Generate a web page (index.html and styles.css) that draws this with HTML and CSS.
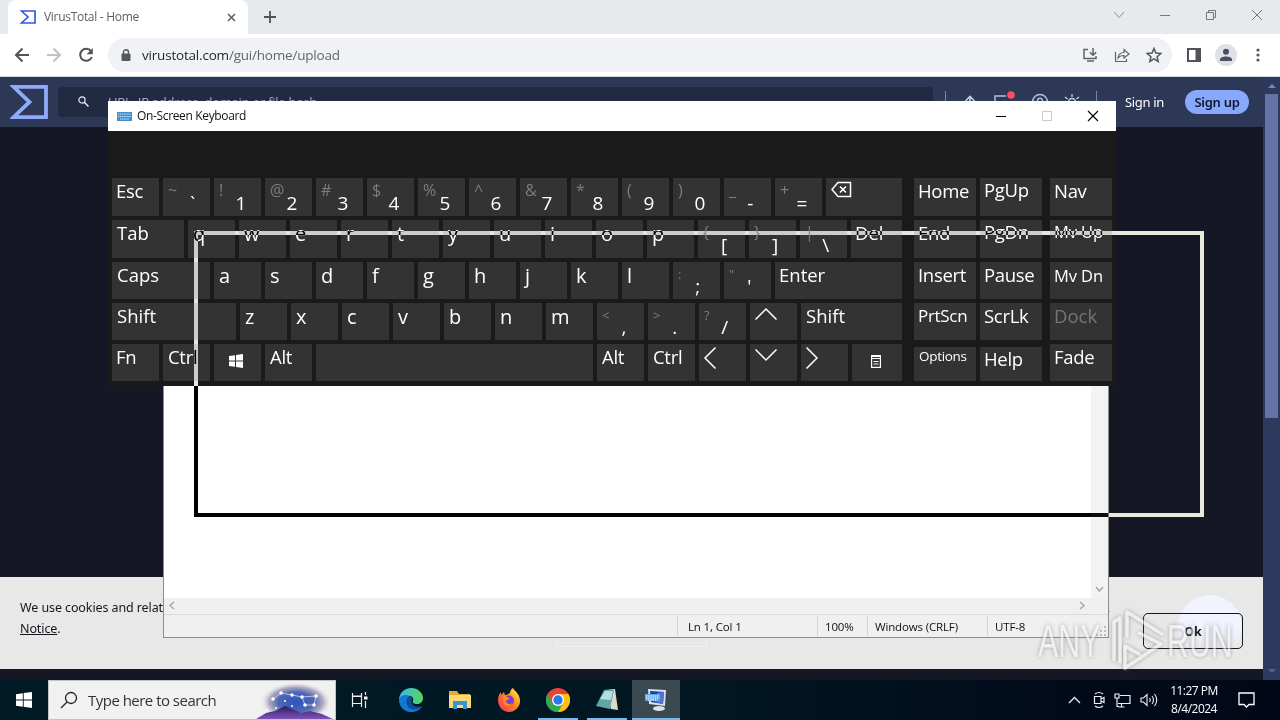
FILE: index.html
```
<!DOCTYPE html>
<html lang="en">
<head>
<meta charset="utf-8">
<title>Desktop</title>
<link rel="stylesheet" href="styles.css">
</head>
<body>
<div class="desktop">
  <section class="browser">
    <div class="tabs">
      <div class="tab">
        <svg class="tab-logo" width="16" height="14" viewBox="0 0 16 14"><path d="M1.5 1H15v12H1.5L8 7z" fill="none" stroke="#3a57e0" stroke-width="1.7"/></svg>
        <span class="tab-title">VirusTotal - Home</span>
        <svg width="9" height="9" viewBox="0 0 9 9"><path d="M1 1l7 7M8 1L1 8" stroke="#5a5d61" stroke-width="1.5"/></svg>
      </div>
      <svg class="plus" width="12" height="12" viewBox="0 0 12 12"><path d="M6 0v12M0 6h12" stroke="#505357" stroke-width="1.8"/></svg>
      <div class="win-controls">
        <svg width="12" height="12" viewBox="0 0 12 12"><path d="M1 3l5 5.500 5-5.500" fill="none" stroke="#8b8e91"/></svg>
        <svg width="12" height="12" viewBox="0 0 12 12"><path d="M1 6.500h10" stroke="#777"/></svg>
        <svg width="12" height="12" viewBox="0 0 12 12"><path d="M1.500 3.500h7v7h-7zM3.500 3.500v-2h7v7h-2" fill="none" stroke="#777"/></svg>
        <svg width="12" height="12" viewBox="0 0 12 12"><path d="M1 1l10 10M11 1L1 11" stroke="#777"/></svg>
      </div>
    </div>
    <div class="toolbar">
      <svg width="16" height="16" viewBox="0 0 16 16"><path d="M15 8H2M8.500 1.500L2 8l6.500 6.500" fill="none" stroke="#505357" stroke-width="2"/></svg>
      <svg width="16" height="16" viewBox="0 0 16 16"><path d="M1 8h13M7.500 1.500L14 8l-6.500 6.500" fill="none" stroke="#bfc1c4" stroke-width="2"/></svg>
      <svg width="16" height="16" viewBox="0 0 16 16"><path d="M13 4.200A6 6 0 1 0 13.800 10" fill="none" stroke="#505357" stroke-width="2"/><path d="M14.800 1v6.200H8.600z" fill="#505357"/></svg>
      <div class="omnibox">
        <svg width="10" height="13" viewBox="0 0 10 13"><rect x="0.500" y="4.500" width="9" height="7.500" rx="1" fill="#54575b"/><path d="M2.500 5V3.200a2.500 2.500 0 0 1 5 0V5" fill="none" stroke="#54575b" stroke-width="1.400"/></svg>
        <span class="url"><b>virustotal.com</b>/gui/home/upload</span>
        <svg class="omni-first" width="16" height="16" viewBox="0 0 16 16"><path d="M6 2.500H2v9h12V9M5 14h7M11 1v7M7.800 5.200L11 8.300l3.200-3.100" fill="none" stroke="#5f6368" stroke-width="1.500"/></svg>
        <svg width="16" height="16" viewBox="0 0 16 16"><path d="M1.500 5v9.500h11V12M4 11c.5-4 3-5.500 6-5.500V2.500L15 7l-5 4V8.500C7.500 8.500 5.500 9 4 11z" fill="none" stroke="#5f6368" stroke-width="1.200"/></svg>
        <svg width="16" height="16" viewBox="0 0 16 16"><path d="M8 1.500l1.900 4.600 4.900.4-3.700 3.200 1.100 4.800L8 11.900l-4.200 2.600 1.100-4.800L1.200 6.500l4.900-.4z" fill="none" stroke="#54575b" stroke-width="1.500"/></svg>
      </div>
      <svg class="panel" width="14" height="14" viewBox="0 0 14 14"><rect x="1" y="1" width="12" height="12" fill="none" stroke="#505357" stroke-width="2"/><path d="M8.500 1H13v12H8.500z" fill="#505357"/></svg>
      <svg class="avatar" width="22" height="22" viewBox="0 0 22 22"><circle cx="11" cy="11" r="11" fill="#dee1e6"/><circle cx="11" cy="7.800" r="3" fill="#4a5064"/><path d="M5 17v-1.500c0-4 12-4 12 0V17z" fill="#4a5064"/></svg>
      <svg class="dots" width="4" height="14" viewBox="0 0 4 14"><g fill="#54575b"><circle cx="2" cy="2" r="1.600"/><circle cx="2" cy="7" r="1.600"/><circle cx="2" cy="12" r="1.600"/></g></svg>
    </div>
    <div class="page">
      <div class="page-main">
        <header class="vt-header">
          <svg class="vt-logo" width="38" height="34" viewBox="0 0 38 34"><path d="M3.500 1.800H36v30.400H3.500L19.500 17z" fill="none" stroke="#8eaaf8" stroke-width="3.800"/></svg>
          <div class="vt-search">
            <svg width="11" height="11" viewBox="0 0 11 11"><circle cx="4" cy="4" r="3.100" fill="none" stroke="#e6e9f2" stroke-width="1.200"/><path d="M6.300 6.300L10.500 10.500" stroke="#e6e9f2" stroke-width="1.500"/></svg>
            <span>URL, IP address, domain or file hash</span>
          </div>
          <div class="vt-icons">
            <i></i>
            <svg width="16" height="18" viewBox="0 0 16 18"><path d="M8 16V4M3.500 8L8 3.500 12.500 8" fill="none" stroke="#c6cfe6" stroke-width="1.600"/></svg>
            <svg width="22" height="22" viewBox="0 0 22 22"><path d="M13 5H2v14l4-4h11v-4" fill="none" stroke="#b4bfdd" stroke-width="1.500"/><circle cx="18" cy="4" r="3.800" fill="#ff4d5e"/></svg>
            <svg width="18" height="18" viewBox="0 0 18 18"><circle cx="9" cy="9" r="7.500" fill="none" stroke="#b4bfdd" stroke-width="1.400"/><path d="M6.500 8a2.500 2.500 0 1 1 3.500 2L9 11v1" fill="none" stroke="#b4bfdd" stroke-width="1.400"/></svg>
            <svg width="16" height="18" viewBox="0 0 16 18"><circle cx="8" cy="9" r="3.500" fill="none" stroke="#c6cfe6" stroke-width="1.500"/><path d="M8 1v3M1 4l2.500 2M15 4l-2.500 2M0 9h2M14 9h2" stroke="#c6cfe6" stroke-width="1.300"/></svg>
            <i></i>
          </div>
          <span class="sign-in">Sign in</span>
          <span class="sign-up">Sign up</span>
        </header>
        <div class="cookies">
          <p>We use cookies and related technologies<br><u>Notice</u>.</p>
          <span class="behind"></span>
          <span class="comma">,</span>
          <span class="bubble"></span>
          <span class="ok">Ok</span>
        </div>
      </div>
      <div class="scroll">
        <svg width="16" height="16" viewBox="0 0 16 16"><path d="M4 11l4-4 4 4z" fill="#7384b5"/></svg>
        <div class="thumb"></div>
        <svg width="16" height="16" viewBox="0 0 16 16"><path d="M4 5l4 4 4-4z" fill="#536493"/></svg>
      </div>
    </div>
  </section>

  <section class="notepad">
    <div class="np-area"><div class="np-v"><svg width="9" height="7" viewBox="0 0 9 7"><path d="M1 1l3.500 4L8 1" fill="none" stroke="#a8a8a8" stroke-width="1.500"/></svg></div></div>
    <div class="np-h">
      <svg width="7" height="9" viewBox="0 0 7 9"><path d="M6 1L2 4.500 6 8" fill="none" stroke="#a8a8a8" stroke-width="1.500"/></svg>
      <svg width="7" height="9" viewBox="0 0 7 9"><path d="M1 1l4 3.500L1 8" fill="none" stroke="#a8a8a8" stroke-width="1.500"/></svg>
    </div>
    <div class="np-status">
      <span class="s1">Ln 1, Col 1</span><span class="s2">100%</span><span class="s3">Windows (CRLF)</span><span class="s4">UTF-8</span>
      <svg width="12" height="12" viewBox="0 0 12 12"><path d="M8 1h2v2H8zM8 5h2v2H8zM8 9h2v2H8zM4 5h2v2H4zM4 9h2v2H4zM0 9h2v2H0z" fill="#bdbdbd"/></svg>
    </div>
  </section>

  <section class="osk">
    <div class="osk-title">
      <svg width="15" height="9" viewBox="0 0 15 9"><rect width="15" height="9" fill="#3f8fd2"/><path d="M1 2h13M1 4.500h13M3 7h9" stroke="#d7ebfa" stroke-dasharray="1.300 .8"/></svg>
      <span>On-Screen Keyboard</span>
      <div class="osk-controls">
        <svg width="12" height="12" viewBox="0 0 12 12"><path d="M1 6.500h10" stroke="#000"/></svg>
        <svg width="12" height="12" viewBox="0 0 12 12"><path d="M1.500 1.500h9v9h-9z" fill="none" stroke="#c9c9c9"/></svg>
        <svg width="12" height="12" viewBox="0 0 12 12"><path d="M1 1l10 10M11 1L1 11" stroke="#000" stroke-width="1.100"/></svg>
      </div>
    </div>
    <div class="osk-body">
      <div class="keys">
        <div class="row">
          <div class="key tight">Esc</div>
          <div class="key dual"><s>~</s><b>`</b></div><div class="key dual"><s>!</s><b>1</b></div><div class="key dual"><s>@</s><b>2</b></div><div class="key dual"><s>#</s><b>3</b></div><div class="key dual"><s>$</s><b>4</b></div><div class="key dual"><s>%</s><b>5</b></div><div class="key dual"><s>^</s><b>6</b></div><div class="key dual"><s>&amp;</s><b>7</b></div><div class="key dual"><s>*</s><b>8</b></div><div class="key dual"><s>(</s><b>9</b></div><div class="key dual"><s>)</s><b>0</b></div><div class="key dual wide"><s>_</s><b>-</b></div><div class="key dual"><s>+</s><b>=</b></div>
          <div class="key grow"><svg class="bksp" width="21" height="17" viewBox="0 0 21 17"><path d="M7 1.500h12.500v14H7L1 8.500z" fill="none" stroke="#fff" stroke-width="1.500"/><path d="M9 5.500l6 6M15 5.500l-6 6" stroke="#fff" stroke-width="1.600"/></svg></div>
        </div>
        <div class="row">
          <div class="key tabk">Tab</div>
          <div class="key ltr">q</div><div class="key ltr">w</div><div class="key ltr">e</div><div class="key ltr">r</div><div class="key ltr">t</div><div class="key ltr">y</div><div class="key ltr">u</div><div class="key ltr">i</div><div class="key ltr">o</div><div class="key ltr">p</div><div class="key dual wide"><s>{</s><b>[</b></div><div class="key dual wide"><s>}</s><b>]</b></div><div class="key dual wide"><s>|</s><b>\</b></div>
          <div class="key grow tight">Del</div>
        </div>
        <div class="row">
          <div class="key caps">Caps</div>
          <div class="key ltr">a</div><div class="key ltr">s</div><div class="key ltr">d</div><div class="key ltr">f</div><div class="key ltr">g</div><div class="key ltr">h</div><div class="key ltr">j</div><div class="key ltr">k</div><div class="key ltr">l</div><div class="key dual sm quote"><s>:</s><b>;</b></div><div class="key dual sm quote"><s>"</s><b>'</b></div>
          <div class="key grow tight">Enter</div>
        </div>
        <div class="row">
          <div class="key shift">Shift</div>
          <div class="key ltr">z</div><div class="key ltr">x</div><div class="key ltr">c</div><div class="key ltr">v</div><div class="key ltr">b</div><div class="key ltr">n</div><div class="key ltr">m</div><div class="key dual sm"><s>&lt;</s><b>,</b></div><div class="key dual sm"><s>&gt;</s><b>.</b></div><div class="key dual sm"><s>?</s><b>/</b></div>
          <div class="key tight"><svg class="up" width="24" height="14" viewBox="0 0 24 14"><path d="M1.500 12.500L12 2l10.500 10.500" fill="none" stroke="#fff" stroke-width="1.500"/></svg></div>
          <div class="key grow">Shift</div>
        </div>
        <div class="row">
          <div class="key tight">Fn</div><div class="key">Ctrl</div>
          <div class="key tight"><svg class="winkey" width="14" height="14" viewBox="0 0 14 14"><path d="M0 2l6-.8v5.300H0zM7 1l7-1v6.500H7zM0 7.500h6v5.300L0 12zM7 7.500h7V14l-7-1z" fill="#fff"/></svg></div>
          <div class="key">Alt</div><div class="key space"></div><div class="key">Alt</div><div class="key">Ctrl</div>
          <div class="key tight"><svg class="side" width="14" height="24" viewBox="0 0 14 24"><path d="M12.500 1.500L2 12l10.500 10.500" fill="none" stroke="#fff" stroke-width="1.500"/></svg></div>
          <div class="key tight"><svg class="up" width="24" height="14" viewBox="0 0 24 14"><path d="M1.500 1.500L12 12 22.500 1.500" fill="none" stroke="#fff" stroke-width="1.500"/></svg></div>
          <div class="key tight"><svg class="side" width="14" height="24" viewBox="0 0 14 24"><path d="M1.500 1.500L12 12 1.500 22.500" fill="none" stroke="#fff" stroke-width="1.500"/></svg></div>
          <div class="key grow"><svg class="menukey" width="10" height="13" viewBox="0 0 10 13"><path d="M.6.600h8.800v11.800H.6zM0 3.500h10M2.500 6.500h5M2.500 9h5" fill="none" stroke="#fff" stroke-width="1.200"/><path d="M0 0h10v2H0z" fill="#fff"/></svg></div>
        </div>
      </div>
      <div class="navkeys">
        <div class="row"><div class="key">Home</div><div class="key hi">PgUp</div><div class="key last">Nav</div></div>
        <div class="row"><div class="key">End</div><div class="key hi">PgDn</div><div class="key last mid top">Mv Up</div></div>
        <div class="row"><div class="key">Insert</div><div class="key">Pause</div><div class="key last mid">Mv Dn</div></div>
        <div class="row"><div class="key med">PrtScn</div><div class="key">ScrLk</div><div class="key last dim">Dock</div></div>
        <div class="row"><div class="key low opt">Options</div><div class="key low">Help</div><div class="key last">Fade</div></div>
      </div>
    </div>
  </section>

  <div class="drag-frame"></div>

  <div class="watermark">
    <span>ANY</span>
    <svg width="60" height="66" viewBox="0 0 60 66"><path d="M6 52V14l6-4v44M19 28V4l35 22M31 25l22 11L17 60V38l14 8" fill="none" stroke="#f4f4f4" stroke-width="3.500" stroke-linejoin="round" stroke-linecap="round"/></svg>
    <span>RUN</span>
  </div>

  <footer class="taskbar">
    <div class="start"><svg width="16" height="16" viewBox="0 0 16 16"><path d="M0 2.200l6.800-1v6.300H0zM7.700 1.100L16 0v7.500H7.700zM0 8.400h6.800v6.400L0 13.800zM7.700 8.400H16V16l-8.300-1.200z" fill="#fff"/></svg></div>
    <div class="search">
      <svg width="18" height="18" viewBox="0 0 18 18"><circle cx="11" cy="7" r="5.500" fill="none" stroke="#222" stroke-width="1.300"/><path d="M7 11L1 17" stroke="#222" stroke-width="1.300"/></svg>
      <span>Type here to search</span>
      <svg class="art" width="80" height="38" viewBox="0 0 80 38">
        <defs><radialGradient id="sky"><stop offset="0" stop-color="#2c55bd"/><stop offset=".5" stop-color="#5068b4"/><stop offset=".75" stop-color="#a59cb8" stop-opacity=".85"/><stop offset="1" stop-color="#f0f0f0" stop-opacity="0"/></radialGradient><linearGradient id="hill" x2="0" y2="1"><stop offset="0" stop-color="#2a1a5e"/><stop offset="1" stop-color="#7d55b8"/></linearGradient></defs>
        <ellipse cx="41" cy="21" rx="36" ry="20" fill="url(#sky)"/>
        <path d="M1 38l10-6 9-2 10-5 7 3 9 4 9-2 12 3 11 5z" fill="url(#hill)"/>
        <path d="M18 18l8-6 11 2 10 2 14-1-2 9h-9l-3-8" fill="none" stroke="#dfe6ff" stroke-width=".7"/>
        <g fill="#fff"><circle cx="18" cy="18" r="1.800"/><circle cx="26" cy="12" r="1.800"/><circle cx="37" cy="14" r="1.800"/><circle cx="47" cy="16" r="1.800"/><circle cx="61" cy="15" r="1.800"/><circle cx="59" cy="24" r="1.800"/><circle cx="50" cy="24" r="1.800"/><circle cx="30" cy="20" r="1"/><circle cx="37" cy="25" r="1"/><circle cx="21" cy="27" r="1"/><circle cx="12" cy="29" r="1"/></g>
      </svg>
    </div>
    <div class="apps">
      <div class="app first"><svg width="18" height="16" viewBox="0 0 18 16"><path d="M1.500 1v3h9V1M1.500 4.500h9v7h-9zM1.500 15v-3M10.500 15v-3M14.500 0v3M14.500 9v7" fill="none" stroke="#eee" stroke-width="1.200"/><path d="M13 4.500h3.500v3H13z" fill="#fff"/></svg></div>
      <div class="app"><svg width="24" height="24" viewBox="0 0 24 24"><defs><linearGradient id="e1"><stop offset="0" stop-color="#36b7ec"/><stop offset="1" stop-color="#59d65c"/></linearGradient></defs><path d="M0 12A12 12 0 0 1 12 0c7 0 12 5 12 10 0 4-3 6-6 6-3 0-5-1-4-3 1-3-1-5-4-5-5 0-8 3-10 4z" fill="url(#e1)"/><path d="M0 12c1-5 7-6 11-4-4 3-4 9 1 12 4 2 7 1 11-2-2 4-6 6-11 6A12 12 0 0 1 0 12z" fill="#1478d0"/><path d="M10 8c-4 4-3 11 2 13 4 1 7 0 10-3-5 2-11-1-9-6 .6-2-1-4-3-4z" fill="#0d4b9b"/></svg></div>
      <div class="app"><svg width="22" height="20" viewBox="0 0 22 20"><path d="M0 1h8l2 3h11v14H0z" fill="#e9a93a"/><path d="M0 5h22v13H0z" fill="#fcd975"/><path d="M4 19v-8h14v8h-4v-4H8v4z" fill="#3a93d6"/></svg></div>
      <div class="app"><svg width="24" height="24" viewBox="0 0 24 24"><defs><linearGradient id="f1" x1="1" x2="0" y2="1"><stop offset=".1" stop-color="#ffe53e"/><stop offset=".5" stop-color="#ff7a22"/><stop offset="1" stop-color="#f12c70"/></linearGradient></defs><path d="M1 12c0-3 1-6 3-8v3l3-3 1 3c2 0 3-1 5-2 0-2 1-4 3-5 1 3 7 5 7 13 0 6-5 11-11 11S1 19 1 12z" fill="url(#f1)"/><circle cx="12" cy="12.500" r="5" fill="#7a3ed6"/><path d="M6 8c3 0 5 1 7 3-2 0-3 1-4 2 0 3 4 4 6 2-1 4-8 4-9-1z" fill="#ff8a20"/></svg></div>
      <div class="app run"><svg width="24" height="24" viewBox="0 0 24 24"><circle cx="12" cy="12" r="12" fill="#ea4335"/><path d="M1.600 6A12 12 0 0 0 12 24l5.500-9H6.500z" fill="#34a853"/><path d="M12 24A12 12 0 0 0 22.400 6H12l5.200 9z" fill="#fbc116"/><circle cx="12" cy="12" r="6" fill="#fff"/><circle cx="12" cy="12" r="4.700" fill="#2f77ea"/></svg></div>
      <div class="app run"><svg width="24" height="22" viewBox="0 0 24 22"><path d="M9 1l11-1 3 21-7-1z" fill="#ddd9c8"/><path d="M9 1l10 0-4 19L1 17z" fill="#5fa5ad"/><path d="M10 2l8 0-2 9-11-1z" fill="#b5dfdf"/></svg></div>
      <div class="app run active"><svg width="24" height="24" viewBox="0 0 24 24"><path d="M4 1l18 1-1 16-16-2z" fill="#d7dff0"/><path d="M6 3l14 1-1 12-12-2z" fill="#1c3cb0"/><path d="M13 5l7-1-1 12-8-2z" fill="#5873cf"/><path d="M1 6h15v7H1z" fill="#5da9e6"/><path d="M2 8h13M2 10h13M4 12h9" stroke="#fff" stroke-dasharray="1.500 .7"/><ellipse cx="15" cy="20.500" rx="6" ry="2.500" fill="#dfe1e5"/></svg></div>
    </div>
    <div class="tray">
      <svg width="13" height="8" viewBox="0 0 13 8"><path d="M1 7l5.500-5.500L12 7" fill="none" stroke="#eee" stroke-width="1.300"/></svg>
      <svg width="12" height="18" viewBox="0 0 12 18"><path d="M1.500 5.500h6.500v7H1.500zM8 8l3-1.500v5L8 10M2 3q4-3 8 0M2 15q4 3 8 0" fill="none" stroke="#eee" stroke-width="1.200"/></svg>
      <svg width="17" height="15" viewBox="0 0 17 15"><path d="M6 2.500h10v8H4M4.500 14h6M7.500 10.500V14M1 1h4v4H1zM3 5v8.500h2" fill="none" stroke="#eee" stroke-width="1.200"/></svg>
      <svg width="18" height="14" viewBox="0 0 18 14"><path d="M1 5h2.500L7 1.500v11L3.500 9H1zM9.500 5q1.500 2 0 4M12 3q3 4 0 8M14.500 1q4.500 6 0 12" fill="none" stroke="#eee" stroke-width="1.100"/></svg>
      <div class="clock">11:27 PM<br>8/4/2024</div>
      <svg class="note" width="17" height="17" viewBox="0 0 17 17"><path d="M1 1h15v11.500h-5L8.500 15 6 12.500H1z" fill="none" stroke="#fff" stroke-width="1.300"/></svg>
    </div>
  </footer>
</div>
</body>
</html>
```
FILE: styles.css
```
* { box-sizing: border-box; }
body { margin: 0; overflow: hidden; font-family: "Open Sans", "Noto Sans", sans-serif; }
svg { display: block; flex: none; }
.desktop { position: relative; width: 1280px; height: 720px; overflow: hidden; display: flex; flex-direction: column; }

/* Browser */
.browser { height: 680px; display: flex; flex-direction: column; }
.tabs { height: 34px; background: #e7eaed; display: flex; align-items: center; padding-left: 8px; }
.tab { width: 240px; height: 34px; background: #fff; border-radius: 8px 8px 0 0; display: flex; align-items: center; padding: 0 12px; }
.tab-title { flex: 1; margin-left: 8px; padding-bottom: 1px; font-size: 12px; color: #5c5f63; letter-spacing: -.3px; white-space: nowrap; }
.plus { margin-left: 16px; }
.win-controls { margin-left: auto; display: flex; gap: 34px; margin-right: 17px; padding-bottom: 4px; }
.toolbar { height: 43px; background: #fff; border-bottom: 1px solid #d4d7dc; display: flex; align-items: center; padding-left: 14px; gap: 16px; }
.omnibox { width: 1064px; height: 34px; margin-left: -2px; border-radius: 17px; background: #f1f2f5; display: flex; align-items: center; padding: 0 10px 0 13px; gap: 16px; }
.url { margin-left: -5px; font-size: 13.5px; letter-spacing: -.2px; color: #62666b; white-space: nowrap; }
.url b { font-weight: 400; color: #25272b; }
.omni-first { margin-left: auto; }
.panel { margin-left: -1px; }
.avatar { margin-left: -2px; }
.dots { margin-left: 3px; }
.page { flex: 1; display: flex; background: #161724; min-height: 0; }
.page-main { width: 1263px; display: flex; flex-direction: column; justify-content: space-between; padding-bottom: 11px; }
.vt-header { height: 50px; background: #2c3856; display: flex; align-items: center; padding-left: 10px; }
.vt-search { width: 875px; height: 30px; margin-left: 10px; margin-bottom: 1px; background: #222943; border-radius: 4px; display: flex; align-items: center; padding-left: 20px; gap: 19px; color: #a0acc9; font-size: 13px; letter-spacing: -.25px; }
.vt-icons { display: flex; align-items: center; width: 152px; margin-left: 12px; justify-content: space-between; }
.vt-icons i { width: 1px; height: 22px; background: #7b88ab; }
.sign-in { margin-left: 28px; font-size: 13px; font-family: "Noto Sans", sans-serif; color: #fff; width: 60px; letter-spacing: -.35px; }
.sign-up { width: 64px; height: 24px; border-radius: 12px; background: #87a8fb; color: #10162c; text-align: center; font: 600 13px/24px "Noto Sans", sans-serif; letter-spacing: -.3px; }
.cookies { height: 92px; background: #e8e8e8; padding: 20px; position: relative; font: 12.5px/21px "Noto Sans", sans-serif; color: #16171e; letter-spacing: -.1px; }
.cookies p { margin: 0; white-space: nowrap; }
.comma { position: absolute; left: 1107px; top: 20px; }
.behind { position: absolute; left: 556px; top: 54px; width: 151px; height: 16px; border: 1px solid #f1f1f1; }
.bubble { position: absolute; left: 1178px; top: 18px; width: 64px; height: 64px; border-radius: 50%; background: linear-gradient(#f1f4ff 50%, #e8e8e8 90%); }
.ok { position: absolute; left: 1143px; top: 36px; width: 100px; height: 36px; border: 1px solid #14161f; border-radius: 5px; text-align: center; font-weight: 700; line-height: 36px; }
.scroll { width: 17px; background: #2c3a5d; display: flex; flex-direction: column; align-items: center; }
.thumb { width: 13px; height: 324px; background: #6474a6; margin-top: 1px; margin-bottom: auto; }

/* Notepad */
.notepad { position: absolute; left: 163px; top: 380px; width: 946px; height: 258px; border: 1px solid #8c8c8c; background: #fff; display: flex; flex-direction: column; }
.np-area { flex: 1; display: flex; justify-content: flex-end; }
.np-v { width: 17px; background: #f3f3f3; display: flex; align-items: flex-end; justify-content: center; padding-bottom: 5px; }
.np-h { height: 16px; background: #f0f0f0; display: flex; justify-content: space-between; align-items: center; padding: 0 22px 1px 4px; }
.np-status { height: 23px; border-top: 1px solid #dadada; background: #f0f0f0; display: flex; font-size: 11.5px; letter-spacing: -.15px; color: #111; padding-left: 513px; }
.np-status span { border-left: 1px solid #d5d5d5; height: 20px; margin-top: 1px; line-height: 21px; white-space: nowrap; }
.s1 { width: 140px; padding-left: 10px; }
.s2 { width: 50px; padding-left: 7px; }
.s3 { width: 120px; padding-left: 7px; }
.s4 { width: 109px; padding-left: 7px; }
.np-status svg { margin-top: 10px; }

/* On-screen keyboard */
.osk { position: absolute; left: 108px; top: 101px; width: 1008px; height: 285px; background: #1a1a1a; display: flex; flex-direction: column; }
.osk-title { height: 30px; background: #fff; display: flex; align-items: center; padding-left: 9px; font-size: 12px; letter-spacing: -.35px; color: #111; }
.osk-title span { margin-left: 5px; padding-bottom: 1px; }
.osk-controls { margin-left: auto; display: flex; gap: 34px; margin-right: 17px; padding-bottom: 1px; }
.osk-body { display: flex; padding: 47px 4px 0; }
.keys { width: 790px; display: flex; flex-direction: column; gap: 4px; }
.navkeys { width: 198px; margin-left: 12px; display: flex; flex-direction: column; gap: 4px; }
.row { display: flex; gap: 4px; height: 37px; }
.row:nth-child(-n+2) { height: 38px; }
.key { width: 47px; background: #333; color: #fff; font-size: 18.5px; line-height: 26px; letter-spacing: -.3px; padding-left: 5px; white-space: nowrap; flex: none; }
.key.grow { flex: 1; }
.key.tight { padding-left: 4px; }
.key.tabk { width: 72px; letter-spacing: 0; }
.key.caps { width: 98px; letter-spacing: 0; }
.key.shift { width: 124px; }
.shift, .row > .key.grow { letter-spacing: 0; }
.key.space { width: 277px; }
.key.ltr { font-size: 20px; line-height: 27px; }
.dual { display: flex; justify-content: space-between; padding: 0 15px 0 5px; }
.dual s { text-decoration: none; color: #7d7d7d; font-size: 16px; line-height: 24px; width: 0; }
.dual b { font-weight: 400; font-size: 19px; line-height: 50px; }
.dual.wide { padding-right: 18px; }
.dual.quote { padding-right: 20px; }
.dual.sm s { font-size: 13px; }
.dual.sm:not(.quote) { padding-right: 18px; }
.dual.sm b { line-height: 48px; }
.bksp { margin-top: 3px; }
.up { margin: 4px 0 0; }
.side { margin: 2px 0 0; }
.winkey { margin: 10px 0 0 11px; }
.menukey { margin: 11px 0 0 14px; }
.navkeys .key { width: 62px; padding-left: 4px; }
.navkeys .key.last { margin-left: 4px; }
.navkeys .hi { line-height: 24px; }
.navkeys .mid { font-size: 16.5px; line-height: 27px; letter-spacing: -.1px; }
.navkeys .top { line-height: 24px; }
.navkeys .med { font-size: 17px; line-height: 26px; }
.navkeys .dim { color: #757575; letter-spacing: 0; }
.navkeys .low { margin-top: 3px; height: 34px; line-height: 24px; }
.navkeys .opt { font-size: 13.5px; line-height: 18px; padding-left: 5px; }

/* Inverted outline shown while the window is being dragged */
.drag-frame { position: absolute; left: 194px; top: 231px; width: 1010px; height: 286px; border: 4px solid #fff; mix-blend-mode: difference; }

.watermark { position: absolute; left: 1038px; top: 608px; width: 200px; height: 66px; display: flex; align-items: center; opacity: .62; filter: drop-shadow(0 0 2px #777); color: #f6f6f6; }
.watermark span { font: 46px/66px "Liberation Sans", sans-serif; width: 68px; transform: scaleX(.66); transform-origin: 0 50%; flex: none; }
.watermark svg { margin: 0 -1px 0 2px; }

/* Taskbar */
.taskbar { height: 40px; background: linear-gradient(90deg, #001b25, #011722 55%, #020a1a 85%, #020817); display: flex; }
.start { width: 48px; display: flex; align-items: center; justify-content: center; }
.search { width: 288px; background: #f1f1f1; border: 1px solid #c4c4c4; display: flex; align-items: center; padding-left: 11px; font-size: 15px; color: #333; letter-spacing: -.52px; }
.search span { margin-left: 10px; white-space: nowrap; }
.art { margin-left: auto; }
.apps { display: flex; gap: 1px; }
.app { width: 48px; display: flex; align-items: center; justify-content: center; }
.app.first { margin-right: 2px; }
.app.run { padding-top: 2px; border-bottom: 2px solid #76b9ed; width: 40px; margin: 0 4px; }
.app.active { width: 48px; margin: 0; background: #3a4a50; }
.tray { margin-left: auto; display: flex; align-items: center; gap: 9px; padding-right: 25px; }
.tray > :first-child { margin-right: 3px; }
.clock { width: 54px; font-size: 12px; line-height: 18px; color: #fff; text-align: center; letter-spacing: -.5px; white-space: nowrap; }
.note { margin-left: 8px; }
```
